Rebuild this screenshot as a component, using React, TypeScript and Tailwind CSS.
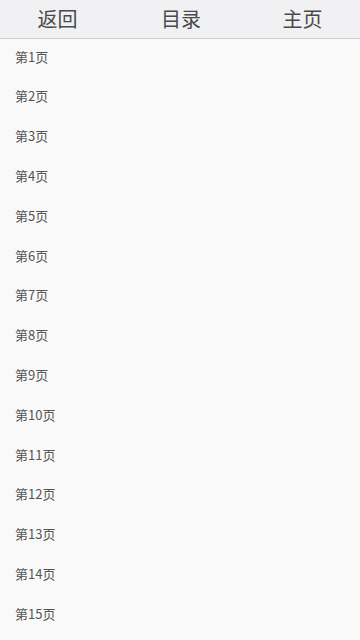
import React from "react";

export default function App() {
  const items = Array.from({ length: 15 }, (_, i) => `第${i + 1}页`);
  return (
    <div
      className="w-[360px] h-[640px] overflow-hidden bg-[#f9f9f9]"
      style={{ fontFamily: '"Noto Sans CJK SC", sans-serif' }}
    >
      <div className="grid grid-cols-3 h-[39px] bg-[#f1f1f3] border-b border-[#cfcfcf] text-[20px] text-[#4a4a4a] leading-[38px]">
        <div className="text-center pr-[5px]">返回</div>
        <div className="text-center pl-[2px]">目录</div>
        <div className="text-center pl-[5px]">主页</div>
      </div>
      <div>
        {items.map((t) => (
          <div key={t} className="h-[39.8px] flex items-center pl-[15px] pb-[5px] text-[13px] text-[#555]">
            {t}
          </div>
        ))}
      </div>
    </div>
  );
}
